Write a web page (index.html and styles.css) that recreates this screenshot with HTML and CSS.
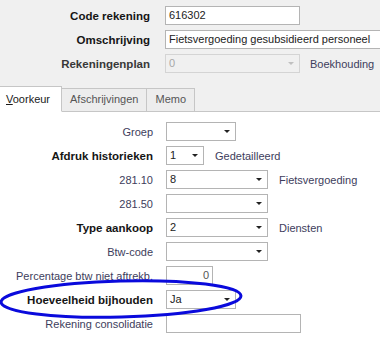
FILE: index.html
```html
<!DOCTYPE html>
<html lang="en">
<head>
    <meta charset="UTF-8">
    <title>Rekening</title>
    <link rel="stylesheet" href="styles.css">
</head>
<body>
    <div class="window">
        <div class="top">
            <div class="row">
                <label class="lbl bold">Code rekening</label>
                <div class="field w135">616302</div>
            </div>
            <div class="row">
                <label class="lbl bold">Omschrijving</label>
                <div class="field w230">Fietsvergoeding gesubsidieerd personeel</div>
            </div>
            <div class="row">
                <label class="lbl bold dim">Rekeningenplan</label>
                <div class="field select disabled w135">0<span class="arrow"></span></div>
                <span class="note">Boekhouding</span>
            </div>
        </div>

        <div class="tabs">
            <div class="tab active"><u>V</u>oorkeur</div>
            <div class="tab">Afschrijvingen</div>
            <div class="tab">Memo</div>
            <div class="tab-fill"></div>
        </div>

        <div class="panel">
            <div class="row">
                <label class="lbl">Groep</label>
                <div class="field select w70"><span class="arrow"></span></div>
            </div>
            <div class="row">
                <label class="lbl bold">Afdruk historieken</label>
                <div class="field select w38">1<span class="arrow"></span></div>
                <span class="note">Gedetailleerd</span>
            </div>
            <div class="row">
                <label class="lbl">281.10</label>
                <div class="field select w102">8<span class="arrow"></span></div>
                <span class="note">Fietsvergoeding</span>
            </div>
            <div class="row">
                <label class="lbl">281.50</label>
                <div class="field select w102"><span class="arrow"></span></div>
            </div>
            <div class="row">
                <label class="lbl bold">Type aankoop</label>
                <div class="field select w102">2<span class="arrow"></span></div>
                <span class="note">Diensten</span>
            </div>
            <div class="row">
                <label class="lbl">Btw-code</label>
                <div class="field select w102"><span class="arrow"></span></div>
            </div>
            <div class="row">
                <label class="lbl">Percentage btw niet aftrekb.</label>
                <div class="field num w47">0</div>
            </div>
            <div class="row">
                <label class="lbl bold">Hoeveelheid bijhouden</label>
                <div class="field select w70">Ja<span class="arrow"></span></div>
            </div>
            <div class="row">
                <label class="lbl">Rekening consolidatie</label>
                <div class="field w135"></div>
            </div>
        </div>

        <svg class="mark" width="250" height="50" viewBox="0 0 250 50">
            <ellipse cx="121" cy="22" rx="120" ry="18" transform="rotate(-1.5 121 22)" fill="none" stroke="#0a0adc" stroke-width="3"/>
        </svg>
    </div>
</body>
</html>
```

FILE: styles.css
```css
body {
    margin: 0;
    font-family: "Liberation Sans", Arial, sans-serif;
    font-size: 11px;
    color: #3d3d5c;
}
.window {
    position: relative;
    width: 380px;
    height: 353px;
    overflow: hidden;
    background: #fff;
}
.top {
    background: #f0f0f0;
    padding: 6px 0 0 0;
    height: 80px;
    display: flex;
    flex-direction: column;
    gap: 5px;
}
.row {
    display: flex;
    align-items: center;
    height: 19px;
}
.top .lbl {
    width: 150px;
    margin-right: 15px;
}
.panel .lbl {
    width: 153px;
    margin-right: 13px;
}
.lbl {
    text-align: right;
    white-space: nowrap;
    flex-shrink: 0;
}
.bold {
    font-weight: bold;
    font-size: 11.5px;
    color: #151515;
}
.dim {
    color: #383838;
}
.field {
    position: relative;
    box-sizing: border-box;
    height: 19px;
    border: 1px solid #b4b4b4;
    background: #fff;
    color: #222;
    padding: 0 3px;
    line-height: 17px;
    white-space: nowrap;
    overflow: hidden;
    flex-shrink: 0;
}
.field.disabled {
    background: #f0f0f0;
    border-color: #d4d4d4;
    color: #a8a8a8;
}
.field.num {
    text-align: right;
    color: #555;
}
.arrow {
    position: absolute;
    right: 5px;
    top: 7px;
    width: 0;
    height: 0;
    border-left: 3px solid transparent;
    border-right: 3px solid transparent;
    border-top: 3px solid #222;
}
.disabled .arrow {
    border-top-color: #c0c0c0;
}
.w38 { width: 38px; }
.w47 { width: 47px; }
.w70 { width: 70px; }
.w102 { width: 102px; }
.w135 { width: 135px; }
.w230 { width: 230px; }
.note {
    margin-left: 11px;
    white-space: nowrap;
}
.top .note {
    margin-left: 10px;
}
.tabs {
    display: flex;
    align-items: flex-end;
    height: 26px;
    background: #f0f0f0;
}
.tab {
    box-sizing: border-box;
    height: 24px;
    padding: 0 8px;
    line-height: 21px;
    border: 1px solid #c6c6c6;
    border-left: none;
    border-bottom: 1px solid #c6c6c6;
    background: #ededed;
    color: #555;
}
.tab.active {
    height: 26px;
    width: 62px;
    padding: 0 0 0 6px;
    line-height: 24px;
    background: #fff;
    border-bottom-color: #fff;
    color: #1a1a1a;
}
.tab-fill {
    flex: 1;
    height: 24px;
    box-sizing: border-box;
    border-bottom: 1px solid #c6c6c6;
}
.panel {
    padding-top: 10px;
    display: flex;
    flex-direction: column;
    gap: 5px;
}
.mark {
    position: absolute;
    left: 0;
    top: 277px;
}
```
